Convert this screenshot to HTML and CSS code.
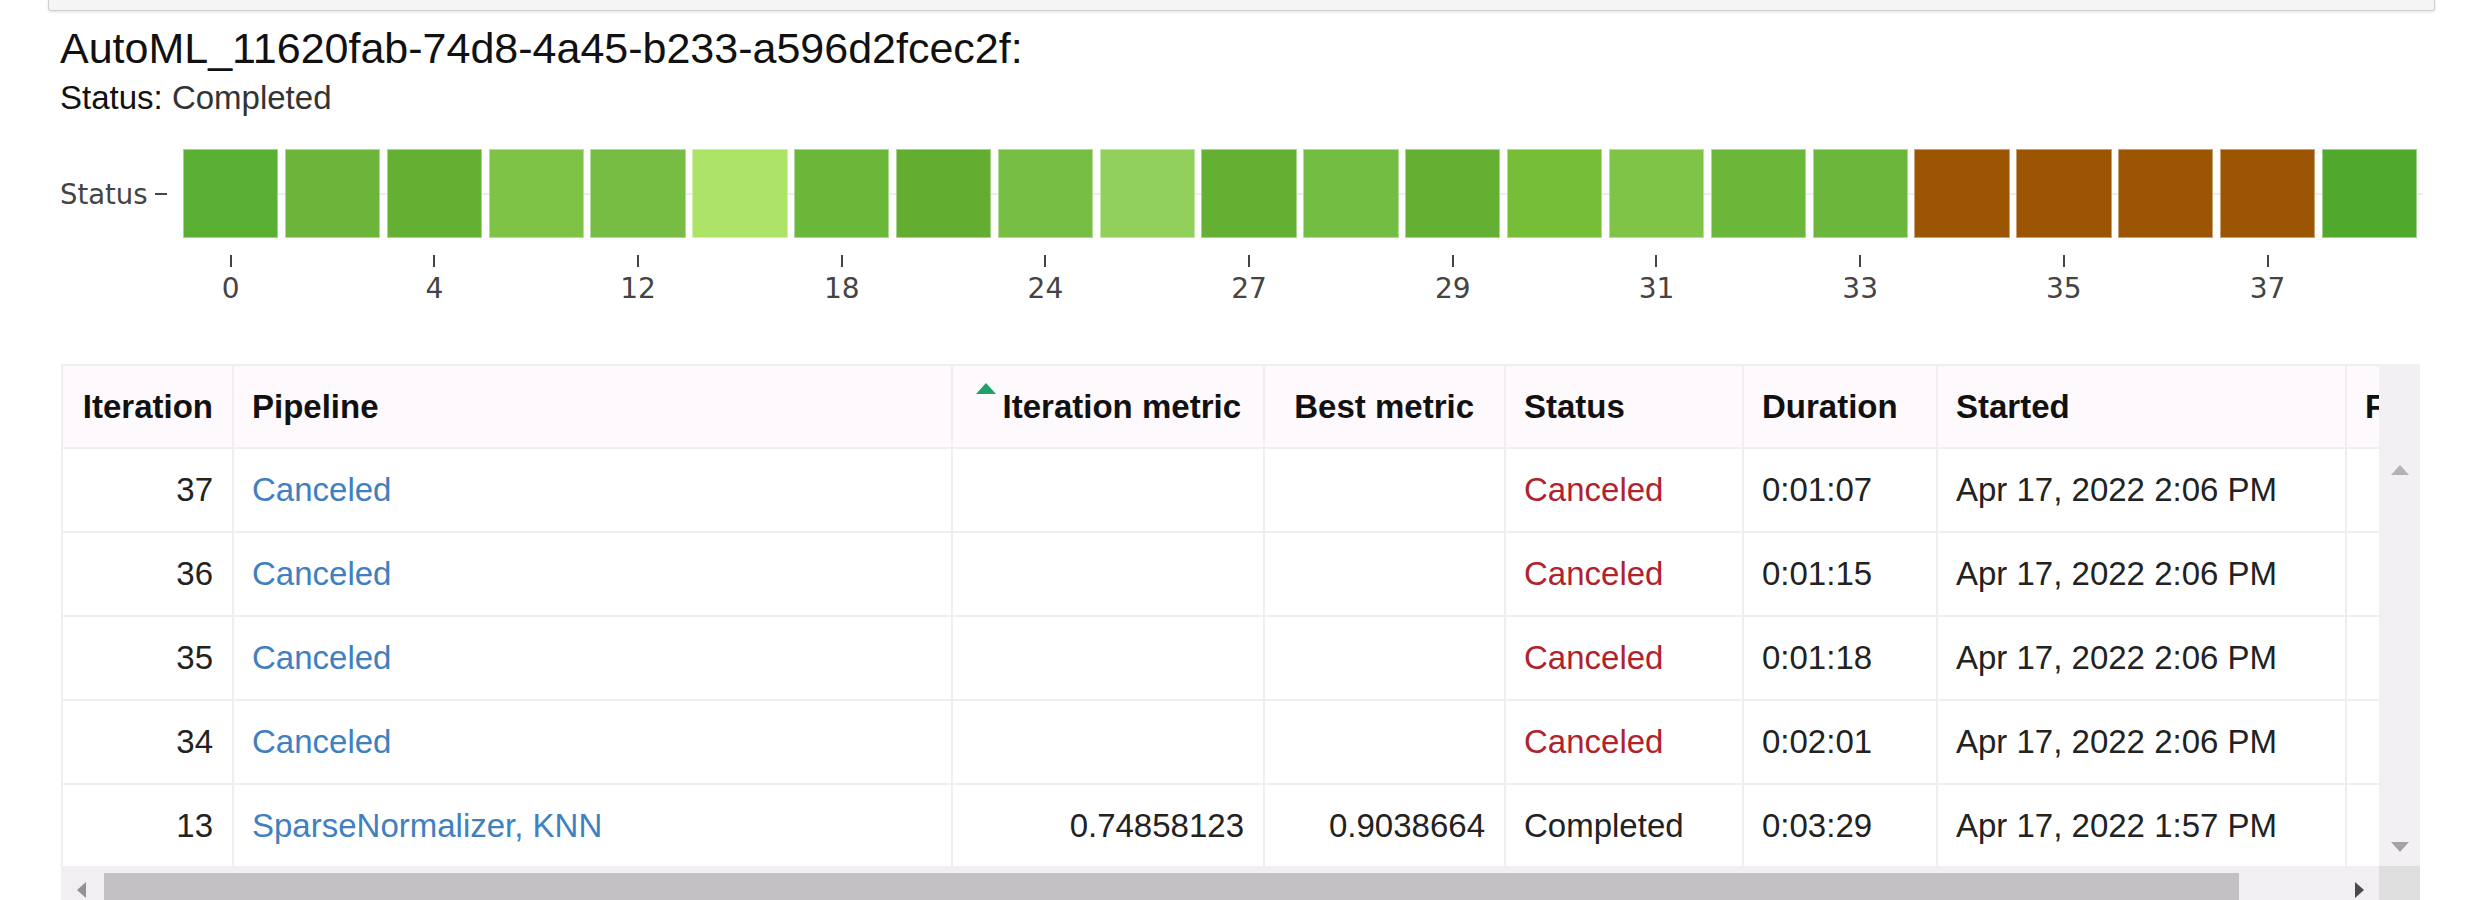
FILE: index.html
```html
<!DOCTYPE html>
<html lang="en">
<head>
<meta charset="utf-8">
<title>AutoML run</title>
<link rel="stylesheet" href="styles.css">
</head>
<body>
<div class="page">
  <div class="prev-output"></div>
  <h2 class="run-title">AutoML_11620fab-74d8-4a45-b233-a596d2fcec2f:</h2>
  <div class="run-status"><span class="status-label">Status:</span> Completed</div>

  <div class="chart">
    <div class="yaxis"><span class="ylabel">Status</span><span class="ytick"></span></div>
    <div class="plot">
      <div class="bars">
        <div class="bar" style="background:#5ab032"></div>
        <div class="bar" style="background:#6db43b"></div>
        <div class="bar" style="background:#64b033"></div>
        <div class="bar" style="background:#7fc346"></div>
        <div class="bar" style="background:#77bd43"></div>
        <div class="bar" style="background:#ade366"></div>
        <div class="bar" style="background:#6ab739"></div>
        <div class="bar" style="background:#63ae31"></div>
        <div class="bar" style="background:#76be44"></div>
        <div class="bar" style="background:#91d05a"></div>
        <div class="bar" style="background:#64b032"></div>
        <div class="bar" style="background:#74bd43"></div>
        <div class="bar" style="background:#64b033"></div>
        <div class="bar" style="background:#76bd38"></div>
        <div class="bar" style="background:#7fc447"></div>
        <div class="bar" style="background:#6ab73a"></div>
        <div class="bar" style="background:#6bb73b"></div>
        <div class="bar" style="background:#9b5503"></div>
        <div class="bar" style="background:#9b5503"></div>
        <div class="bar" style="background:#9b5503"></div>
        <div class="bar" style="background:#9b5503"></div>
        <div class="bar" style="background:#50a82d"></div>
      </div>
      <div class="xaxis">
        <div class="xcell"><span class="xtick"></span><span class="xlabel">0</span></div>
        <div class="xcell"></div>
        <div class="xcell"><span class="xtick"></span><span class="xlabel">4</span></div>
        <div class="xcell"></div>
        <div class="xcell"><span class="xtick"></span><span class="xlabel">12</span></div>
        <div class="xcell"></div>
        <div class="xcell"><span class="xtick"></span><span class="xlabel">18</span></div>
        <div class="xcell"></div>
        <div class="xcell"><span class="xtick"></span><span class="xlabel">24</span></div>
        <div class="xcell"></div>
        <div class="xcell"><span class="xtick"></span><span class="xlabel">27</span></div>
        <div class="xcell"></div>
        <div class="xcell"><span class="xtick"></span><span class="xlabel">29</span></div>
        <div class="xcell"></div>
        <div class="xcell"><span class="xtick"></span><span class="xlabel">31</span></div>
        <div class="xcell"></div>
        <div class="xcell"><span class="xtick"></span><span class="xlabel">33</span></div>
        <div class="xcell"></div>
        <div class="xcell"><span class="xtick"></span><span class="xlabel">35</span></div>
        <div class="xcell"></div>
        <div class="xcell"><span class="xtick"></span><span class="xlabel">37</span></div>
        <div class="xcell"></div>
      </div>
    </div>
  </div>

  <div class="grid-frame">
    <div class="viewport">
      <table class="runs">
        <colgroup>
          <col class="c-iter"><col class="c-pipe"><col class="c-metric"><col class="c-best">
          <col class="c-status"><col class="c-dur"><col class="c-start"><col class="c-end">
        </colgroup>
        <thead>
          <tr>
            <th class="num">Iteration</th>
            <th>Pipeline</th>
            <th class="num metric-head"><span class="sort-asc"></span>Iteration metric</th>
            <th class="num best-head">Best metric</th>
            <th>Status</th>
            <th>Duration</th>
            <th>Started</th>
            <th>Finished</th>
          </tr>
        </thead>
        <tbody>
          <tr>
            <td class="num">37</td><td><a class="pipe">Canceled</a></td><td class="num"></td><td class="num"></td>
            <td class="canceled">Canceled</td><td>0:01:07</td><td>Apr 17, 2022 2:06 PM</td><td></td>
          </tr>
          <tr>
            <td class="num">36</td><td><a class="pipe">Canceled</a></td><td class="num"></td><td class="num"></td>
            <td class="canceled">Canceled</td><td>0:01:15</td><td>Apr 17, 2022 2:06 PM</td><td></td>
          </tr>
          <tr>
            <td class="num">35</td><td><a class="pipe">Canceled</a></td><td class="num"></td><td class="num"></td>
            <td class="canceled">Canceled</td><td>0:01:18</td><td>Apr 17, 2022 2:06 PM</td><td></td>
          </tr>
          <tr>
            <td class="num">34</td><td><a class="pipe">Canceled</a></td><td class="num"></td><td class="num"></td>
            <td class="canceled">Canceled</td><td>0:02:01</td><td>Apr 17, 2022 2:06 PM</td><td></td>
          </tr>
          <tr>
            <td class="num">13</td><td><a class="pipe">SparseNormalizer, KNN</a></td><td class="num">0.74858123</td><td class="num">0.9038664</td>
            <td>Completed</td><td>0:03:29</td><td>Apr 17, 2022 1:57 PM</td><td></td>
          </tr>
        </tbody>
      </table>
    </div>
    <div class="vscroll">
      <div class="vscroll-head"></div>
      <div class="vscroll-track"><span class="arr-up"></span><span class="arr-down"></span></div>
    </div>
    <div class="hscroll"><span class="arr-left"></span><div class="hthumb"></div><span class="arr-right"></span></div>
    <div class="corner"></div>
  </div>
</div>
</body>
</html>
```

FILE: styles.css
```css
* { box-sizing: border-box; }

html, body {
  margin: 0;
  background: #ffffff;
}

body {
  font-family: "Liberation Sans", Arial, sans-serif;
  color: #222;
  overflow: hidden;
}

.page {
  width: 2470px;
  padding-left: 60px;
}

/* bottom edge of the previous output cell */
.prev-output {
  margin-left: -12px;
  width: 2387px;
  height: 11px;
  background: #f5f5f5;
  border: 1px solid #cfcfcf;
  border-top: none;
  border-radius: 0 0 3px 3px;
  box-shadow: 0 1px 3px rgba(0, 0, 0, 0.12);
}

.run-title {
  margin: 13px 0 0 0;
  font-size: 43px;
  line-height: 49px;
  font-weight: normal;
  color: #111;
}

.run-status {
  margin-top: 6px;
  font-size: 33px;
  line-height: 38px;
  color: #333;
}

.status-label { color: #111; }

/* ---------- chart ---------- */
.chart {
  margin-top: 32px;
  display: flex;
  align-items: flex-start;
  font-family: "DejaVu Sans", Verdana, sans-serif;
  color: #444;
}

.yaxis {
  width: 123px;
  height: 89px;
  display: flex;
  align-items: center;
}

.ylabel {
  font-size: 27.5px;
  line-height: 32px;
}

.ytick {
  width: 12px;
  height: 2px;
  margin-left: 7px;
  background: #444;
}

.plot {
  width: 2240px;
}

.bars {
  position: relative;
  height: 89px;
  display: flex;
  gap: 6.5px;
  width: 2234px;
}

.bars::before {
  content: "";
  position: absolute;
  left: 0;
  right: -6px;
  top: 44px;
  height: 2px;
  background: #ececec;
}

.bar {
  position: relative;
  flex: 1 1 0;
  border: 1px solid rgba(255, 255, 255, 0.45);
}

.xaxis {
  display: flex;
  gap: 6.5px;
  width: 2234px;
}

.xcell {
  flex: 1 1 0;
  display: flex;
  flex-direction: column;
  align-items: center;
}

.xtick {
  margin-top: 17px;
  width: 2px;
  height: 12px;
  background: #444;
}

.xlabel {
  margin-top: 6px;
  font-size: 28px;
  line-height: 32px;
  white-space: nowrap;
}

/* ---------- table ---------- */
.grid-frame {
  margin-top: 59px;
  margin-left: 1px;
  display: grid;
  grid-template-columns: 2318px 41px;
  grid-template-rows: 502px 48px;
}

.viewport {
  overflow: hidden;
  background: #fff;
}

.runs {
  table-layout: fixed;
  border-collapse: collapse;
  width: 2584px;
  font-size: 33px;
  color: #222;
}

.c-iter { width: 171px; }
.c-pipe { width: 719px; }
.c-metric { width: 312px; }
.c-best { width: 241px; }
.c-status { width: 238px; }
.c-dur { width: 194px; }
.c-start { width: 409px; }
.c-end { width: 300px; }

.runs th,
.runs td {
  border: 2px solid #f1eef2;
  padding: 0 19px 0 18px;
  white-space: nowrap;
  overflow: hidden;
  vertical-align: middle;
  text-align: left;
}

.runs thead tr {
  height: 83px;
  background: #fdf9fd;
}

.runs tbody tr {
  height: 84px;
}

.runs th {
  font-weight: bold;
  color: #111;
}

.runs th.num,
.runs td.num {
  text-align: right;
}

.runs th.metric-head {
  padding-right: 22px;
}

.runs th.best-head {
  padding-right: 30px;
}

.sort-asc {
  display: inline-block;
  position: relative;
  top: -24px;
  width: 0;
  height: 0;
  border-left: 10px solid transparent;
  border-right: 10px solid transparent;
  border-bottom: 11px solid #20a06a;
  margin-right: 7px;
  vertical-align: baseline;
}

.pipe {
  color: #4180c0;
  text-decoration: none;
}

.canceled {
  color: #b0222c;
}

/* ---------- scrollbars ---------- */
.vscroll {
  background: #f3f0f4;
  display: flex;
  flex-direction: column;
}

.vscroll-head {
  height: 83px;
}

.vscroll-track {
  flex: 1;
  display: flex;
  flex-direction: column;
  justify-content: space-between;
  align-items: center;
  padding: 18px 0 14px 0;
}

.arr-up {
  width: 0;
  height: 0;
  border-left: 9px solid transparent;
  border-right: 9px solid transparent;
  border-bottom: 10px solid #b4b4b4;
}

.arr-down {
  width: 0;
  height: 0;
  border-left: 9px solid transparent;
  border-right: 9px solid transparent;
  border-top: 10px solid #a4a4a4;
}

.hscroll {
  background: #f2eff3;
  display: flex;
  align-items: center;
  padding: 0 15px 0 16px;
}

.arr-left {
  width: 0;
  height: 0;
  border-top: 8px solid transparent;
  border-bottom: 8px solid transparent;
  border-right: 9px solid #929292;
}

.hthumb {
  margin-left: 18px;
  width: 2135px;
  height: 34px;
  background: #c3c1c4;
}

.arr-right {
  margin-left: auto;
  width: 0;
  height: 0;
  border-top: 8px solid transparent;
  border-bottom: 8px solid transparent;
  border-left: 9px solid #4a4a4a;
}

.corner {
  background: #dedede;
}
```
